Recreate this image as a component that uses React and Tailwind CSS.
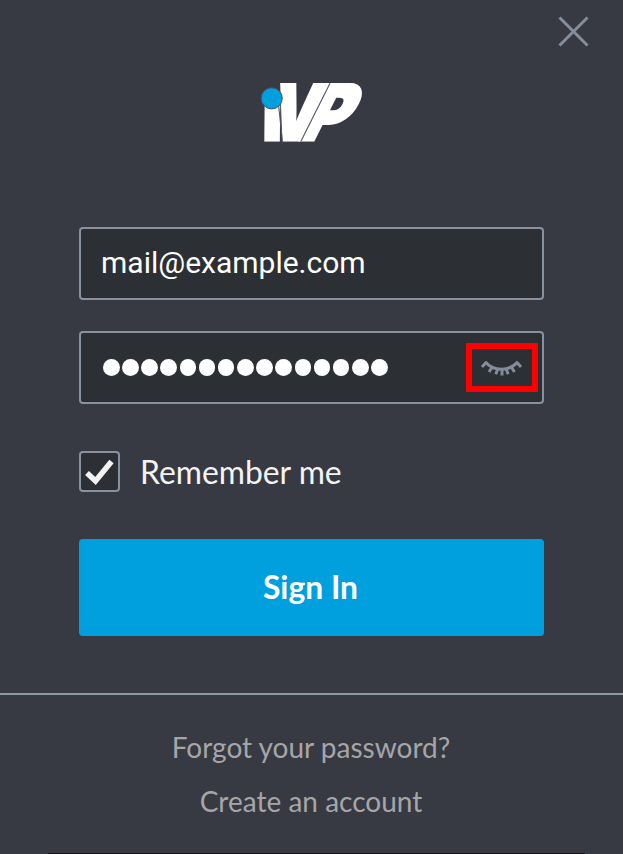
import React from "react";

function Logo() {
  return (
    <svg className="block h-[90px] w-[140px] shrink-0 overflow-visible" viewBox="0 0 140 90" role="img" aria-label="iVP">
      <g fill="#fff" stroke="#fff" strokeWidth="2.8" fontFamily="Inter, sans-serif" fontWeight="900" fontSize="76.500">
        <text transform="matrix(0.87 0 -0.01 1 22.2 70.300)">ı</text>
        <text transform="matrix(0.8 0 -0.23 1 26 70.300)" x="32" textAnchor="middle">V</text>
        <text transform="matrix(0.87 0 -0.502 1 57.500 70.300)">P</text>
      </g>
      <path d="M38.7 36L42.4 71.7M90 13.3L60.7 71.7" stroke="#55585f" strokeWidth="1.1" />
      <circle cx="31.7" cy="28.3" r="10.6" fill="#00a0df" stroke="#44505c" strokeWidth="1" />
    </svg>
  );
}

function ClosedEye() {
  return (
    <svg className="h-6 w-[44px]" viewBox="0 0 44 24" fill="none" stroke="#828c9a" strokeWidth="3">
      <path d="M5.500 6C13 15.500 30 15.500 37.500 6" />
      <path d="M6.500 6L2 11M12.500 10.500L9 16M18 12.500L15.800 18.200M22 13V19.500M26 12.500L28.200 18.200M31 10.500L34.500 16M36.500 6L41 11" />
    </svg>
  );
}

export default function App() {
  return (
    <main className="flex h-[854px] w-[623px] flex-col overflow-hidden bg-[#373a42] font-['Lato',sans-serif]">
      <header className="flex h-[70px] shrink-0 justify-end pt-[16px] pr-[34px]">
        <button aria-label="Close" className="size-[32px]">
          <svg viewBox="0 0 32 32" className="size-full" stroke="#858e9b" strokeWidth="3">
            <path d="M2.500 1.500L30.500 29.500M30.500 1.500L2.500 29.500" />
          </svg>
        </button>
      </header>
      <div className="flex shrink-0 pl-[240px]">
        <Logo />
      </div>
      <form className="mx-[79px] mt-[67px] flex shrink-0 flex-col">
        <div className="flex h-[73px] items-center rounded-[4px] border-2 border-[#8792a0] bg-[#2c2f33] pl-[20px]">
          <span className="mb-[2px] font-['Roboto',sans-serif] text-[30px] leading-[36px] text-white">mail@example.com</span>
        </div>
        <div className="mt-[31px] flex h-[73px] items-center rounded-[4px] border-2 border-[#8792a0] bg-[#2c2f33] pl-[22px]">
          <div className="flex gap-[2.670px]">
            {Array.from({ length: 15 }, (_, i) => (
              <i key={i} className="h-[16.500px] w-[16.500px] rounded-full bg-white" />
            ))}
          </div>
          <button type="button" aria-label="Show password" className="mr-[4px] ml-auto flex h-[49px] w-[72px] items-center justify-center border-6 border-[#fe0000]">
            <ClosedEye />
          </button>
        </div>
        <div className="mt-[47px] flex h-[41px] items-center">
          <span className="flex size-[41px] items-center justify-center rounded-[4px] border-2 border-[#8792a0] bg-[#2c2f33]">
            <svg viewBox="0 0 32 32" className="size-8" fill="none" stroke="#f2f2f2" strokeWidth="5.500">
              <path d="M3 17L11.500 25L27.500 5.500" />
            </svg>
          </span>
          <span className="ml-[20px] text-[31.850px] leading-[38px] text-[#f4f4f4]">Remember me</span>
        </div>
        <button type="button" className="mt-[47px] flex h-[97px] items-center justify-center rounded-[4px] bg-[#00a0df] pt-px pr-[2px] text-[31.800px] font-bold text-white">
          Sign In
        </button>
      </form>
      <footer className="mt-[57px] flex flex-1 flex-col items-center border-t-2 border-[#8f98a5] pt-[34px] text-[28px] leading-[36px] text-[#a6a6a8]">
        <span className="mr-[1px]">Forgot your password?</span>
        <span className="mt-[18px] mr-[1px]">Create an account</span>
        <div className="mt-auto ml-[10px] h-px w-[537px] bg-[#17141a]" />
      </footer>
    </main>
  );
}
